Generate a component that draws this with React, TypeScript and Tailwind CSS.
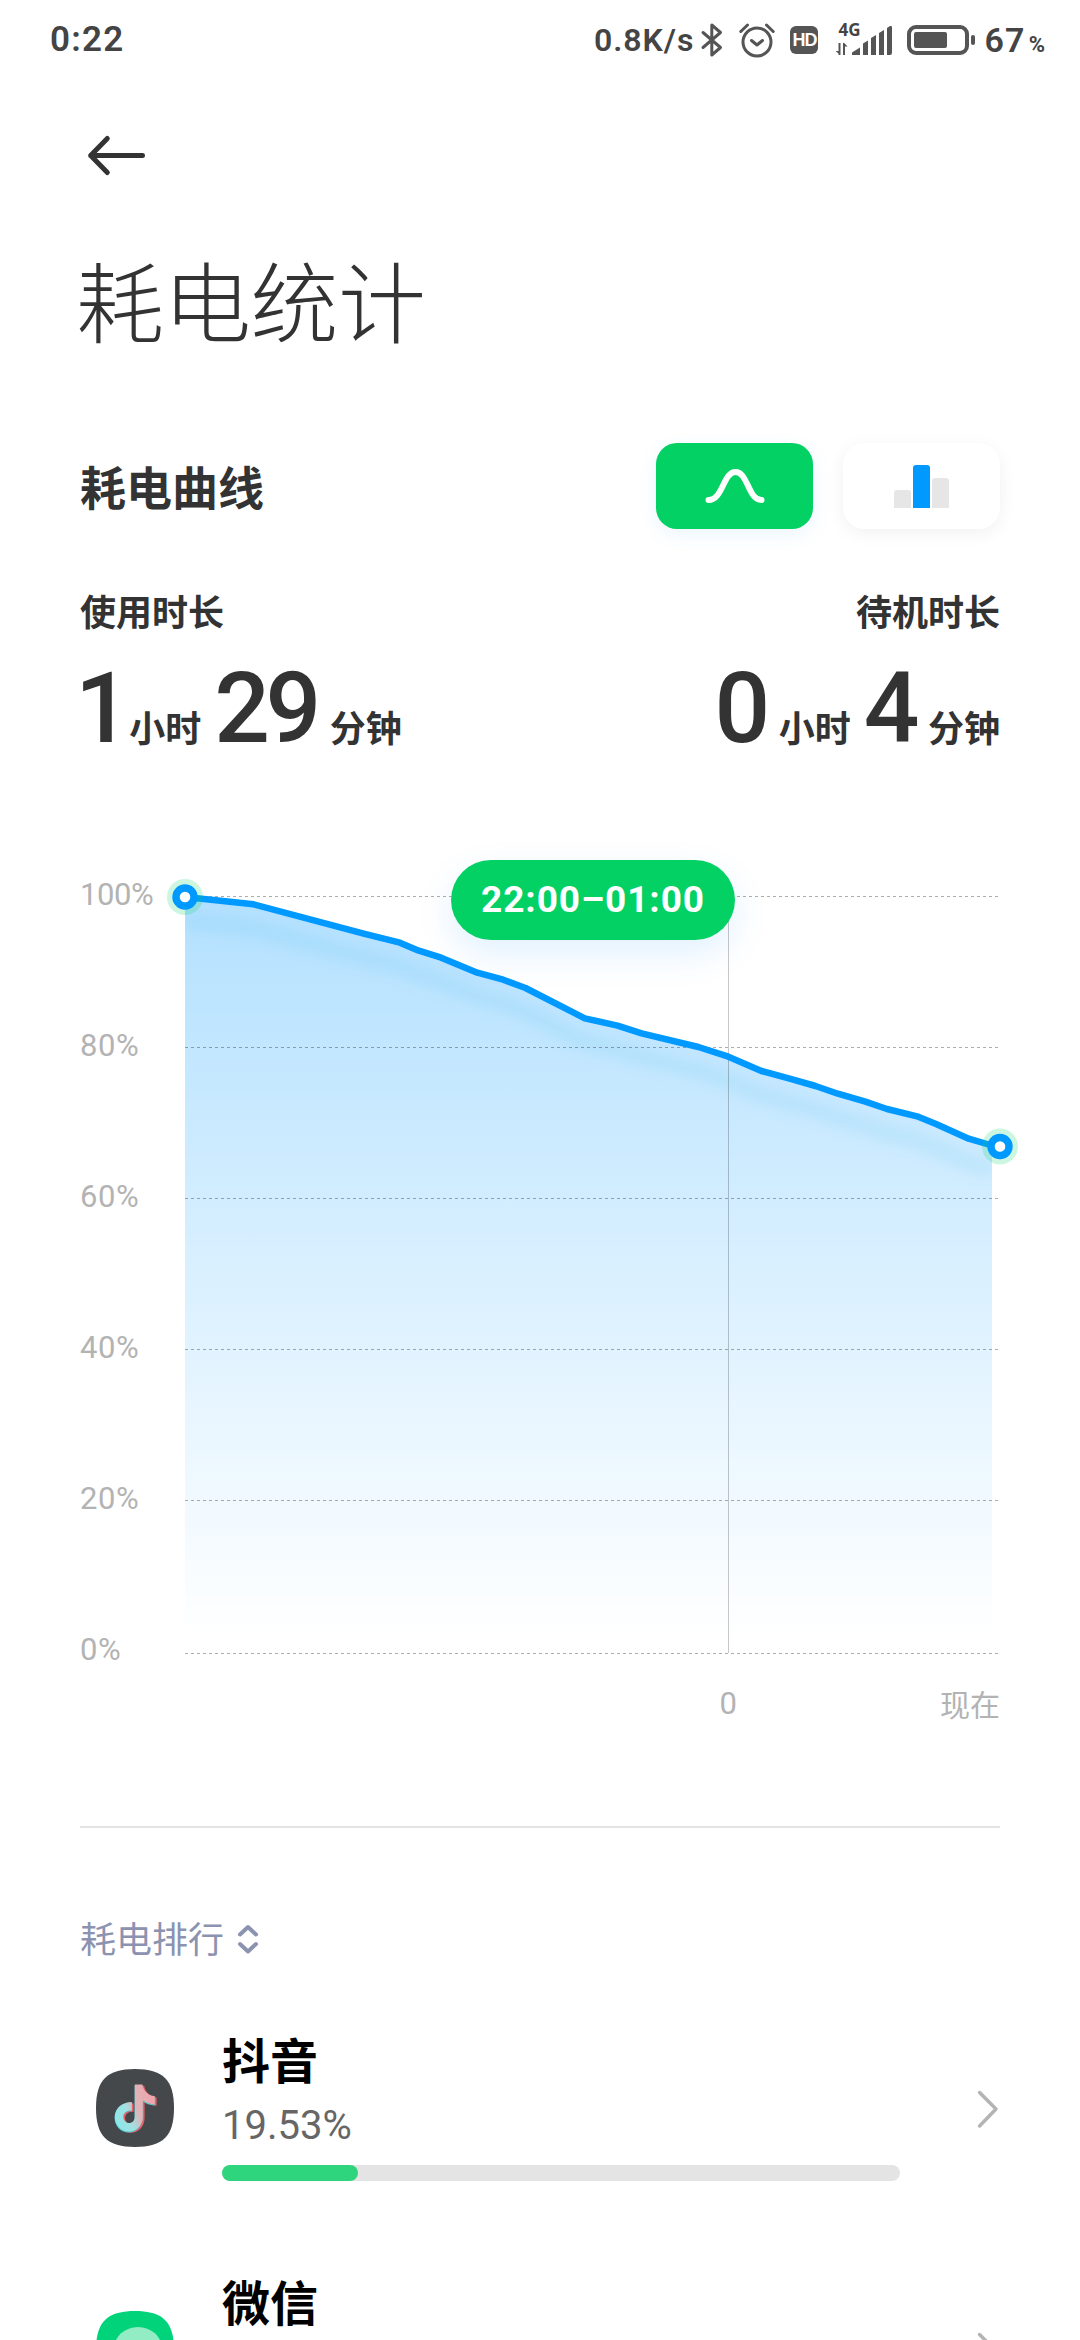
import type { ReactNode } from 'react'

const LEVELS = ['100%', '80%', '60%', '40%', '20%', '0%']
const GRID_Y = [20.5, 171.5, 322.5, 473.5, 624.5, 777.5]

// battery level over time, in plot coordinates (x from the 100% axis, y from 20px above it)
const POINTS: [number, number][] = [
  [20, 21], [88.5, 28.3], [198.7, 57.7], [234.9, 66.7], [253.8, 74.7], [276.2, 81.7],
  [312.3, 96.7], [338.2, 103.7], [360.5, 112], [419.8, 142.3], [452.5, 149.7], [476.6, 157.3],
  [533.4, 171], [563.4, 180.7], [596.4, 195], [624.7, 202.7], [650.5, 210], [672.9, 217.7],
  [700.4, 225.7], [722, 233], [752, 240.3], [771, 248], [803.7, 262.7], [827, 269.5],
]

const SQUIRCLE = 'M39 0C67 0 78 11 78 39S67 78 39 78 0 67 0 39 11 0 39 0Z'
const NOTE = 'M39 16h7.6c.8 6 5.4 11 12.4 11.6V36c-4.8-.2-8.6-1.600-12-4.200V48c0 9-6.500 15-14 15s-14-6-14-14.500S26 33.500 36 33.500V42c-5-.6-8.500 2-8.500 6.200 0 3.600 2.600 6.300 5.800 6.300 3.500 0 5.700-2.600 5.700-6.500Z'

function DouyinIcon() {
  return (
    <svg width="78" height="78" viewBox="0 0 78 78">
      <defs>
        <linearGradient id="note" x1="18" y1="50" x2="60" y2="34" gradientUnits="userSpaceOnUse">
          <stop offset="0" stopColor="#8ae8e8" />
          <stop offset=".34" stopColor="#a2e0e2" />
          <stop offset=".56" stopColor="#dcb6ba" />
          <stop offset="1" stopColor="#f0a4aa" />
        </linearGradient>
      </defs>
      <path d={SQUIRCLE} fill="#44484b" />
      <path d={NOTE} fill="#e8606a" transform="translate(1.600 .8)" />
      <path d={NOTE} fill="#4fc4cd" transform="translate(-.4 .4)" />
      <path d={NOTE} fill="url(#note)" transform="translate(-.2 -.5)" />
    </svg>
  )
}

function WechatIcon() {
  return (
    <svg width="78" height="78" viewBox="0 0 78 78">
      <path d={SQUIRCLE} fill="#00d37a" />
      <ellipse cx="42" cy="37.500" rx="24" ry="21.500" fill="#92ecc4" />
    </svg>
  )
}

function StatusBar() {
  return (
    <div className="flex h-20 items-center pr-[35px] pl-[50px] font-[Roboto] text-[#444]">
      <span className="text-[35px] leading-[76px] font-semibold tracking-[1.2px]">0:22</span>
      <div className="ml-auto flex items-center">
        <span className="text-[32px] leading-[76px] font-semibold tracking-[1px]">0.8K/s</span>
        <svg className="ml-[6px]" width="24" height="36" viewBox="0 0 24 36" fill="none" stroke="#555" strokeWidth="3" strokeLinejoin="round" strokeLinecap="round">
          <path d="M3 10.500 20.500 25.500 11.800 33V3l8.700 7.500L3 25.500" />
        </svg>
        <svg className="ml-[14px]" width="38" height="36" viewBox="0 0 38 36" fill="none" stroke="#555" strokeWidth="3" strokeLinecap="round" strokeLinejoin="round">
          <circle cx="19" cy="20" r="14" />
          <path d="M13.500 18.500 19 23l5.500-4.500M2.800 9.500 9.500 3M28.500 3l6.700 6.500" />
        </svg>
        <div className="ml-[14px] flex h-[28px] w-[28px] items-center justify-center rounded-[6px] bg-[#555] font-['Liberation_Sans'] text-[18px] leading-none font-bold tracking-[-1px] text-white">HD</div>
        <div className="relative ml-[17px] h-[32px] w-[57px]">
          <span className="absolute top-[-4px] left-[3px] font-['Noto_Sans'] text-[17px] leading-[20px] font-bold">4G</span>
          <svg width="57" height="32" viewBox="0 0 57 32" fill="#555">
            <path d="M3.500 19h2v12h-2v-1.500L.5 27h3ZM8 19h1.200l3.300 3.500H10V31H8Z" />
            <path d="M17 31v-2.500l8-5V31ZM28 31V19.500l5-3V31ZM36 31V14l5-3V31ZM44 31V9l5-3V31ZM52 31V4l3-2q2-.5 2 1V29q0 2-2 2Z" />
          </svg>
        </div>
        <svg className="ml-[15px]" width="69" height="30" viewBox="0 0 69 30">
          <rect x="2" y="2" width="58" height="26" rx="7" fill="none" stroke="#555" strokeWidth="4" />
          <rect x="7" y="7" width="33" height="16" rx="2" fill="#555" />
          <rect x="64" y="10" width="4" height="10" rx="2" fill="#555" />
        </svg>
        <div className="ml-[8px] flex items-baseline">
          <span className="text-[34px] leading-[76px] font-semibold tracking-[1.2px]">67</span>
          <span className="ml-[3px] text-[22px] font-bold">%</span>
        </div>
      </div>
    </div>
  )
}

function Duration({ label, hours, minutes, right }: { label: string; hours: number; minutes: number; right?: boolean }) {
  const unit = 'text-[36px] leading-[40px] font-bold'
  return (
    <div className={right ? 'flex flex-col items-end' : 'flex flex-col'}>
      <div className="text-[36px] leading-[40px] font-bold">{label}</div>
      <div className="mt-[31px] flex h-[85px] items-baseline">
        {/* a lone 1 is narrower than the other digits */}
        <span className={hours === 1 ? '-mr-[10px] -ml-[5px]' : ''}><Digits>{hours}</Digits></span>
        <span className={`${unit} mr-[13px]`}>小时</span>
        <Digits>{minutes}</Digits>
        <span className={unit}>分钟</span>
      </div>
    </div>
  )
}

function Digits({ children }: { children: ReactNode }) {
  return <span className="mr-[13px] inline-block font-[Roboto] text-[98px] leading-[96px] font-medium tracking-[-4.5px]">{children}</span>
}

function Handle({ x, y }: { x: number; y: number }) {
  return (
    <g>
      <circle cx={x} cy={y} r="18" fill="#03d163" fillOpacity=".2" />
      <circle cx={x} cy={y} r="9" fill="#fff" stroke="#0099ff" strokeWidth="7.400" />
    </g>
  )
}

function Chart() {
  const line = POINTS.map(([x, y]) => `${x},${y}`).join(' L')
  const area = `M${line} V777 H20 Z`
  return (
    <div className="relative mt-[130px] flex h-[778px]">
      <div className="flex w-[85px] flex-col pt-[4px] font-[Roboto] text-[31px] leading-[30px] tracking-[0.6px] text-[#b3b3b3]">
        {LEVELS.map(l => (
          <div key={l} className={l === '100%' ? 'h-[151px] shrink-0 tracking-[-0.4px]' : 'h-[151px] shrink-0'}>{l}</div>
        ))}
      </div>
      <svg className="shrink-0 overflow-visible" width="835" height="778" viewBox="0 0 835 778" fill="none">
        <defs>
          <linearGradient id="fade" x1="0" y1="20" x2="0" y2="765" gradientUnits="userSpaceOnUse">
            <stop offset="0" stopColor="#0099ff" stopOpacity=".3" />
            <stop offset="1" stopColor="#0099ff" stopOpacity="0" />
          </linearGradient>
          <filter id="soft" x="-10%" y="-30%" width="120%" height="160%">
            <feGaussianBlur stdDeviation="7" />
          </filter>
          <clipPath id="under"><path d={area} /></clipPath>
        </defs>
        <path d={area} fill="url(#fade)" />
        <g clipPath="url(#under)">
          <path d={`M${line}`} stroke="#1ba0d8" strokeOpacity=".09" strokeWidth="15" transform="translate(0 24)" filter="url(#soft)" />
        </g>
        {GRID_Y.map(y => (
          <path key={y} d={`M20 ${y}H833`} stroke="#000" strokeOpacity=".32" strokeDasharray="3 3" />
        ))}
        <path d="M563.500 21V777" stroke="#000" strokeOpacity=".22" />
        <path d={`M${line} L835,270.500`} stroke="#0099ff" strokeWidth="6.500" strokeLinejoin="round" />
        <Handle x={20} y={21} />
        <Handle x={835} y={270.5} />
      </svg>
      <div className="absolute top-[-16px] left-[371px] flex h-[80px] w-[284px] items-center justify-center rounded-full bg-[#03d163] font-[Roboto] text-[37px] leading-[78px] font-bold tracking-[0.9px] text-white shadow-[0_14px_36px_rgba(0,140,255,0.12)]">
        22:00–01:00
      </div>
    </div>
  )
}

function AppRow({ name, icon, percent, fill }: { name: string; icon: ReactNode; percent?: string; fill?: number }) {
  return (
    <div className="flex items-start">
      <div className="mt-[44px] ml-[16px]">{icon}</div>
      <div className="ml-[48px] w-[678px]">
        <div className="mt-[3px] text-[48px] leading-[60px] font-bold text-black">{name}</div>
        {percent && (
          <>
            <div className="mt-[15px] font-[Roboto] text-[40px] leading-[46px] text-[#666]">{percent}</div>
            <div className="mt-[16px] h-[16px] rounded-full bg-[#e4e4e4]">
              <div className="h-full rounded-full bg-[#2fd57d]" style={{ width: fill }} />
            </div>
          </>
        )}
      </div>
      <svg className="mt-[62px] ml-[75px]" width="24" height="42" viewBox="0 0 24 42" fill="none" stroke="#b4b4b4" strokeWidth="3.500" strokeLinecap="round" strokeLinejoin="round">
        <path d="M4.600 5.500 21 22 4.600 39" />
      </svg>
    </div>
  )
}

export default function App() {
  return (
    <div className="h-[2340px] w-[1080px] overflow-hidden bg-white font-['Noto_Sans_CJK_SC',sans-serif] text-[#333]">
      <StatusBar />
      <div className="px-[80px]">
        <svg className="mt-[52px] ml-[4px]" width="64" height="48" viewBox="0 0 64 48" fill="none" stroke="#333" strokeWidth="5" strokeLinecap="round" strokeLinejoin="round">
          <path d="M23.300 6.500 6.700 23.500l16.600 17M6.700 23.500H58.500" />
        </svg>
        <h1 className="mt-[68px] -ml-[4px] text-[88px] leading-[100px] font-light tracking-[-0.7px]">耗电统计</h1>

        <div className="mt-[95px] flex h-[86px] items-center">
          <h2 className="mb-[3px] text-[46px] leading-[60px] font-bold">耗电曲线</h2>
          <button className="ml-auto flex h-[86px] w-[157px] items-center justify-center rounded-[21px] bg-[#03d163] shadow-[0_6px_20px_rgba(0,140,255,0.08)]">
            <svg width="60" height="36" viewBox="0 0 60 36" fill="none" stroke="#fff" strokeWidth="6" strokeLinecap="round">
              <path d="M3.500 32C18 32 18 4 30.500 4S43 32 56.500 32" />
            </svg>
          </button>
          <button className="ml-[30px] flex h-[86px] w-[157px] items-center justify-center rounded-[21px] bg-white shadow-[0_4px_18px_rgba(0,0,0,0.06)]">
            <div className="flex items-end gap-[2px]">
              <div className="h-[18px] w-[17px] rounded-t-[3px] bg-[#e6e6e6]" />
              <div className="h-[43px] w-[17px] rounded-t-[3px] bg-[#0099ff]" />
              <div className="h-[30px] w-[17px] rounded-t-[3px] bg-[#e6e6e6]" />
            </div>
          </button>
        </div>

        <div className="mt-[61px] flex justify-between">
          <Duration label="使用时长" hours={1} minutes={29} />
          <Duration label="待机时长" hours={0} minutes={4} right />
        </div>

        <Chart />

        <div className="mt-[34px] flex h-[30px] items-center justify-end text-[30px] leading-[30px] text-[#b3b3b3]">
          <span className="mt-[2px] mr-[203px] font-[Roboto] text-[31px]">0</span>
          <span>现在</span>
        </div>
        <div className="mt-[108px] h-[2px] bg-[#e4e4e4]" />

        <div className="mt-[89px] flex h-[40px] items-center text-[36px] leading-[40px] text-[#8c93b0]">
          耗电排行
          <svg className="mt-[3px] ml-[13px]" width="22" height="32" viewBox="0 0 22 32" fill="none" stroke="#8c93b0" strokeWidth="4" strokeLinecap="round" strokeLinejoin="round">
            <path d="M3 11.500 11 4l8 7.500M3 21l8 7.500L19 21" />
          </svg>
        </div>

        <div className="mt-[68px] flex flex-col gap-[86px]">
          <AppRow name="抖音" icon={<DouyinIcon />} percent="19.53%" fill={136} />
          <AppRow name="微信" icon={<WechatIcon />} />
        </div>
      </div>
    </div>
  )
}
